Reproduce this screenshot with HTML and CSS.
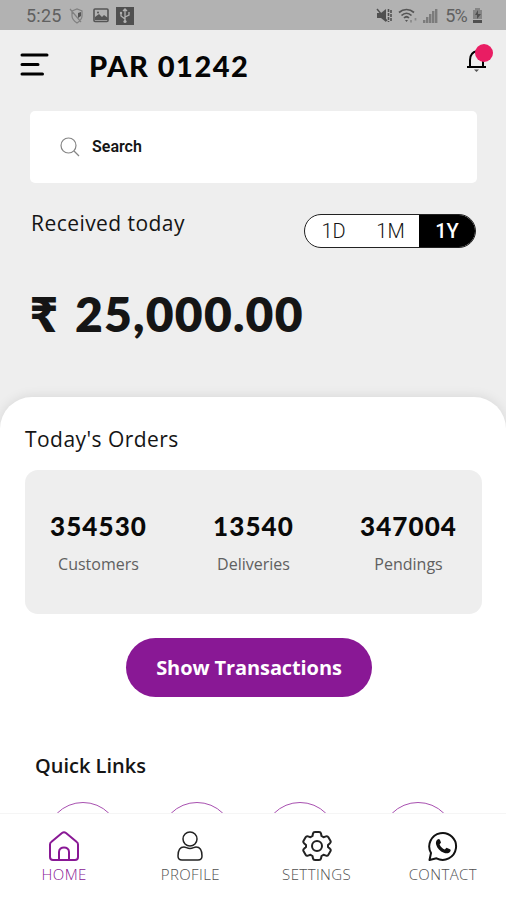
FILE: index.html
```html
<!DOCTYPE html>
<html lang="en">
<head>
    <meta charset="UTF-8">
    <meta name="viewport" content="width=device-width, initial-scale=1.0">
    <title>PAR 01242</title>
    <link rel="stylesheet" href="styles.css">
</head>
<body>
    <div class="status-bar">
        <span class="time">5:25</span>
        <svg class="status-shield" width="16" height="16" viewBox="0 0 16 16" fill="none" stroke="#808080" stroke-width="1.2">
            <path d="M3 3l5-2 5 2v5c0 3-2 5-5 7-3-2-5-4-5-7zM1 1l11 13"/>
            <path d="M9 5l3-1v4l-3 2z" fill="#555" stroke="none"/>
        </svg>
        <svg class="status-photo" width="16" height="15" viewBox="0 0 16 15">
            <rect x="1" y="1" width="14" height="12.5" rx="1" fill="none" stroke="#555" stroke-width="1.6"/>
            <path d="M2 12V9l4-3 3 3 2-2 4 3v2z" fill="#555"/>
            <circle cx="5" cy="4.500" r="1" fill="#555"/>
        </svg>
        <svg class="status-usb" width="18" height="18" viewBox="0 0 18 18">
            <rect width="18" height="18" fill="#505050"/>
            <path d="M9 2.500V15M9 12L5 9V6M9 10l4-2V5M7 4l2-2 2 2" fill="none" stroke="#b2b2b2" stroke-width="1.300"/>
            <circle cx="9" cy="14.500" r="1.600" fill="#b2b2b2"/>
            <circle cx="5" cy="6" r="1.200" fill="#b2b2b2"/>
        </svg>
        <div class="status-right">
            <svg width="17" height="16" viewBox="0 0 17 16" fill="#505050">
                <path d="M1 5h4l5-4v13l-5-4H1z"/>
                <path d="M1 1l10 12" fill="none" stroke="#505050" stroke-width="1.400"/>
                <path d="M12.500 1v13M15 2v11" fill="none" stroke="#505050" stroke-width="1.600" stroke-dasharray="3 1"/>
            </svg>
            <svg width="20" height="16" viewBox="0 0 20 16" fill="none" stroke="#555" stroke-width="1.700">
                <path d="M1 4.500c4.500-4 10.500-4 15 0M3.500 7.500c3-3 7-3 10 0M6 10c1.500-1.500 3.500-1.500 5 0"/>
                <path d="M7 12h3l-1.500 2z" fill="#555" stroke="none"/>
                <path d="M13 12v2.500M17.500 10v2.500" stroke="#888"/>
            </svg>
            <svg width="15" height="15" viewBox="0 0 15 15" fill="#7c7c7c">
                <path d="M0 12h2.400v3H0zM3 9h2.400v6H3zM6 6h2.400v9H6zM9 3h2.400v12H9zM12 1h2.400v14H12z"/>
            </svg>
            <span class="percent">5%</span>
            <svg width="11" height="16" viewBox="0 0 11 16">
                <path d="M3 0h5v2h2v9H1V2h2z" fill="#858585"/>
                <path d="M1 12h9v3H1zM6 2L3 7h2v4l4-5H6z" fill="#505050"/>
            </svg>
        </div>
    </div>

    <header>
        <svg class="menu-icon" width="30" height="26" viewBox="0 0 30 26" fill="none" stroke="#000" stroke-width="3" stroke-linecap="round">
            <path d="M2 3h25M2 12.500h16M2 22h20.500"/>
        </svg>
        <h1>PAR 01242</h1>
        <div class="bell">
            <svg width="22" height="25" viewBox="0 0 22 25" fill="none" stroke="#000" stroke-width="2">
                <path d="M4 19v-7c0-5.500 2.500-8 7-9 4 0 6 3 6 7v9"/>
                <path d="M1 19h19"/>
                <path d="M8 21.500h5l-2.500 2.500z" fill="#555" stroke="none"/>
            </svg>
            <span class="badge"></span>
        </div>
    </header>

    <div class="search">
        <svg width="20" height="20" viewBox="0 0 20 20" fill="none" stroke="#858585" stroke-width="1.200">
            <circle cx="8.500" cy="8.500" r="7.500"/>
            <path d="M14 14l5 5"/>
        </svg>
        <span>Search</span>
    </div>

    <section class="received">
        <h2>Received today</h2>
        <div class="period">
            <span>1D</span>
            <span>1M</span>
            <span class="active">1Y</span>
        </div>
    </section>
    <div class="amount">
        <span class="currency">₹</span>
        <span class="value">25,000.00</span>
    </div>

    <main class="sheet">
        <h2>Today's Orders</h2>
        <div class="orders">
            <div class="order"><strong>354530</strong><span>Customers</span></div>
            <div class="order"><strong>13540</strong><span>Deliveries</span></div>
            <div class="order"><strong>347004</strong><span>Pendings</span></div>
        </div>
        <button class="transactions">Show Transactions</button>
        <h3>Quick Links</h3>
        <div class="links">
            <span></span>
            <span></span>
            <span></span>
            <span></span>
        </div>
    </main>

    <nav>
        <a class="active">
            <svg width="30" height="30" viewBox="0 0 30 30" fill="none" stroke="currentColor" stroke-width="2" stroke-linejoin="round">
                <path d="M4 29c-2 0-3-1-3-3V13.500c0-1 .5-2 1.500-2.700L13 2c1.500-1 2.500-1 4 0l10.500 8.800c1 .7 1.500 1.700 1.500 2.700V26c0 2-1 3-3 3z"/>
                <path d="M10 29v-8c0-6 10-6 10 0v8"/>
            </svg>
            <span>HOME</span>
        </a>
        <a>
            <svg width="30" height="30" viewBox="0 0 30 30" fill="none" stroke="#222" stroke-width="1.500">
                <circle cx="15" cy="8" r="7"/>
                <path d="M9 16c2 0 3 1.500 6 1.500S19 16 21 16c4 0 6 4 6 9 0 3-1 4-4 4H7c-3 0-4-1-4-4 0-5 2-9 6-9z"/>
            </svg>
            <span>PROFILE</span>
        </a>
        <a>
            <svg width="30" height="30" viewBox="0 0 30 30" fill="none" stroke="#222" stroke-width="2" stroke-linejoin="round">
                <path d="M11 2.500Q11.300 1 13 1h4q1.700 0 2 1.500l.5 2.500 2 1.200 2.500-.8q1.600-.5 2.400.9l2 3.400q.8 1.500-.4 2.500L26 14v2l2 1.800q1.200 1 .4 2.500l-2 3.400q-.8 1.400-2.400.9l-2.500-.8-2 1.200-.5 2.500q-.3 1.500-2 1.500h-4q-1.700 0-2-1.500l-.5-2.500-2-1.200-2.500.8q-1.600.5-2.400-.9l-2-3.400q-.8-1.500.4-2.500L4 16v-2l-2-1.800Q.8 11.200 1.600 9.700l2-3.400Q4.400 4.900 6 5.400l2.500.8 2-1.200z"/>
                <circle cx="15" cy="15" r="5"/>
            </svg>
            <span>SETTINGS</span>
        </a>
        <a>
            <svg width="30" height="30" viewBox="0 0 30 30" fill="none" stroke="#111" stroke-width="2" stroke-linejoin="round">
                <path d="M3 22A13.400 13.400 0 1 1 8.500 27.300L1.500 29z"/>
                <path d="M9.500 8.500c1-1 2-.7 2.500.5l1 2.500-1.400 2c1.200 2.500 2.800 4 5.200 5l1.700-1.800 3.500 1.500c1 .5.800 1.500.1 2.500-1.500 2-4 2-6.200 1-4-1.500-6.500-4.200-7.700-8-.7-2-.1-3.800 1.300-5.200z" fill="#111" stroke="none"/>
            </svg>
            <span>CONTACT</span>
        </a>
    </nav>
</body>
</html>
```
FILE: styles.css
```css
* {
    box-sizing: border-box;
}

body {
    display: flex;
    flex-direction: column;
    width: 506px;
    height: 900px;
    margin: 0;
    overflow: hidden;
    background-color: #eeeeee;
    color: #151515;
    font-family: "Open Sans", sans-serif;
}

svg {
    display: block;
    flex: none;
}

h1, h2, h3 {
    margin: 0;
    white-space: nowrap;
}

.status-bar {
    display: flex;
    align-items: center;
    height: 30px;
    flex: none;
    padding: 1px 23px 0 26px;
    background-color: #b2b2b2;
    color: #606060;
    font-family: Roboto, sans-serif;
    font-size: 18px;
}

.time {
    width: 43px;
    letter-spacing: 0.2px;
}

.status-photo {
    margin-left: 8px;
}

.status-usb {
    margin-left: 7px;
}

.status-right {
    display: flex;
    align-items: center;
    gap: 5px;
    margin-left: auto;
}

.percent {
    margin-left: 2px;
    letter-spacing: -0.8px;
}

header {
    display: flex;
    align-items: center;
    height: 70px;
    flex: none;
    padding: 0 16px 0 20px;
}

h1 {
    margin-left: 39px;
    color: #050505;
    font-family: Lato, sans-serif;
    font-size: 29px;
    font-weight: 900;
    letter-spacing: 1.5px;
}

.bell {
    position: relative;
    margin: -10px 0 0 auto;
    padding-right: 2px;
}

.badge {
    position: absolute;
    top: -4px;
    right: -3px;
    width: 18px;
    height: 18px;
    border-radius: 50%;
    background-color: #e91d63;
}

.search {
    display: flex;
    align-items: center;
    gap: 12px;
    height: 72px;
    flex: none;
    margin: 11px 29px 0 30px;
    padding: 0 0 1px 30px;
    border-radius: 5px;
    background-color: #fff;
    font-family: Roboto, sans-serif;
    font-size: 16px;
    font-weight: 600;
}

.received {
    display: flex;
    justify-content: space-between;
    height: 65px;
    flex: none;
    margin-top: 31px;
    padding: 0 30px 0 31px;
}

h2 {
    font-size: 21px;
    font-weight: 400;
    letter-spacing: 0.45px;
    line-height: 18px;
}

.period {
    display: grid;
    grid-template-columns: 57px 57px 56px;
    height: 34px;
    border: 1px solid #222;
    border-radius: 17px;
    overflow: hidden;
    background-color: #fff;
    font-family: Roboto, sans-serif;
    font-size: 20px;
    font-weight: 300;
    line-height: 32px;
    text-align: center;
}

.period .active {
    background-color: #000;
    color: #fff;
    font-weight: 500;
}

.amount {
    display: flex;
    align-items: center;
    height: 70px;
    flex: none;
    padding-left: 30px;
    font-family: Lato, "Open Sans", sans-serif;
    font-size: 48px;
    font-weight: 800;
    line-height: 68px;
}

.currency {
    width: 45px;
}

.value {
    letter-spacing: 1.2px;
}

.sheet {
    flex: 1;
    min-height: 0;
    margin-top: 48px;
    padding: 33px 24px 0 25px;
    overflow: hidden;
    border-radius: 32px 32px 0 0;
    background-color: #fff;
    box-shadow: 0 -1px 12px rgba(0, 0, 0, 0.09);
}

.orders {
    display: grid;
    grid-template-columns: 147px 163px 147px;
    height: 144px;
    margin-top: 22px;
    padding-top: 40px;
    border-radius: 13px;
    background-color: #eeeeee;
}

.order {
    display: flex;
    flex-direction: column;
    align-items: center;
    gap: 10px;
    color: #606060;
    font-size: 16px;
    line-height: 24px;
}

.order strong {
    color: #090909;
    font-family: Lato, sans-serif;
    font-size: 26px;
    font-weight: 900;
    letter-spacing: 1.1px;
    line-height: 32px;
}

.transactions {
    display: block;
    width: 246px;
    height: 59px;
    margin: 24px 0 0 101px;
    padding: 0;
    border: none;
    border-radius: 30px;
    background-color: #891895;
    color: #fff;
    font-family: inherit;
    font-size: 20px;
    font-weight: 700;
    letter-spacing: -0.1px;
}

h3 {
    margin: 56px 0 0 10px;
    font-size: 20px;
    font-weight: 600;
    line-height: 26px;
}

/* tops of the round link buttons, cut off by the nav */
.links {
    display: flex;
    padding: 23px 0 0 21px;
}

.links span {
    flex: none;
    width: 74px;
    height: 74px;
    margin-right: 40px;
    border: 1.5px solid #a850b0;
    border-radius: 50%;
}

.links span:nth-child(2) {
    margin-right: 29px;
}

.links span:nth-child(3) {
    margin-right: 44px;
}

nav {
    display: grid;
    grid-template-columns: repeat(4, 1fr);
    height: 87px;
    flex: none;
    padding: 17px 0 0 1px;
    border-top: 1px solid #f5f5f5;
    background-color: #fff;
    color: #505050;
    font-size: 15px;
    font-weight: 300;
    letter-spacing: 0.4px;
    line-height: 20px;
}

nav a {
    display: flex;
    flex-direction: column;
    align-items: center;
    gap: 3px;
}

nav .active {
    color: #891895;
}
```
